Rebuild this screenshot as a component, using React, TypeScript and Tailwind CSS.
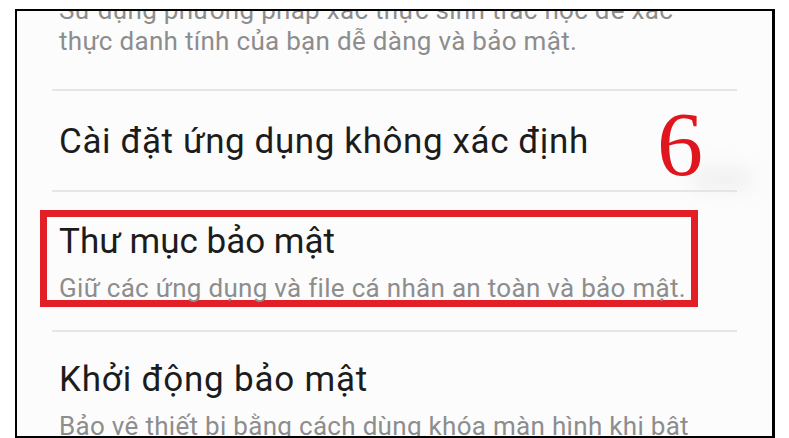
import React from 'react';

const font = { fontFamily: 'Roboto, "Noto Sans", sans-serif' };

const Divider: React.FC<{ className?: string }> = ({ className = '' }) => (
    <div className={`mx-[35px] h-[2px] bg-[#e6e6e6] shrink-0 ${className}`} />
);

const App: React.FC = () => {
    return (
        <div className="w-[789px] h-[438px] bg-white overflow-hidden pt-[9px] pl-[15px]" style={font}>
            <div className="relative w-[760px] h-[429px] bg-[#fcfcfc] border-t-2 border-l-2 border-b-2 border-r-[3px] border-black overflow-hidden flex flex-col">
                {/* clipped item above */}
                <p className="mt-[-16px] pl-[42px] text-[26px] leading-[31px] tracking-[0.3px] text-[#8d8d8d] shrink-0">
                    Sử dụng phương pháp xác thực sinh trắc học để xác
                    <br />
                    thực danh tính của bạn dễ dàng và bảo mật.
                </p>
                <Divider className="mt-[32px]" />

                <p className="mt-[31px] pl-[42px] text-[35px] leading-[40px] tracking-[0.6px] text-[#1c1c1c] shrink-0">
                    Cài đặt ứng dụng không xác định
                </p>
                <Divider className="mt-[28px]" />

                {/* highlighted item */}
                <div className="mt-[18px] ml-[23px] w-[658px] h-[97px] border-[7px] border-[#e21e26] pt-[5px] pl-[12px] shrink-0">
                    <p className="text-[35px] leading-[40px] text-[#1c1c1c] whitespace-nowrap">Thư mục bảo mật</p>
                    <p className="mt-[12px] text-[26px] leading-[28px] tracking-[0.3px] text-[#8d8d8d] whitespace-nowrap">
                        Giữ các ứng dụng và file cá nhân an toàn và bảo mật.
                    </p>
                </div>
                <Divider className="mt-[23px]" />

                <p className="mt-[28px] pl-[42px] text-[35px] leading-[40px] tracking-[0.8px] text-[#1c1c1c] shrink-0">
                    Khởi động bảo mật
                </p>
                <p className="mt-[12px] pl-[42px] text-[26px] leading-[28px] tracking-[0.3px] text-[#8d8d8d] whitespace-nowrap shrink-0">
                    Bảo vệ thiết bị bằng cách dùng khóa màn hình khi bật
                </p>

                {/* step number annotation */}
                <div className="absolute left-[675px] top-[158px] w-[60px] h-[20px] rounded-full bg-[#e0e0e0] opacity-50 blur-[10px]" />
                <span
                    className="absolute left-[640px] top-[87px] text-[92px] leading-none text-[#e0161e]"
                    style={{ fontFamily: '"Liberation Serif", serif' }}
                >
                    6
                </span>
            </div>
        </div>
    );
};

export default App;
